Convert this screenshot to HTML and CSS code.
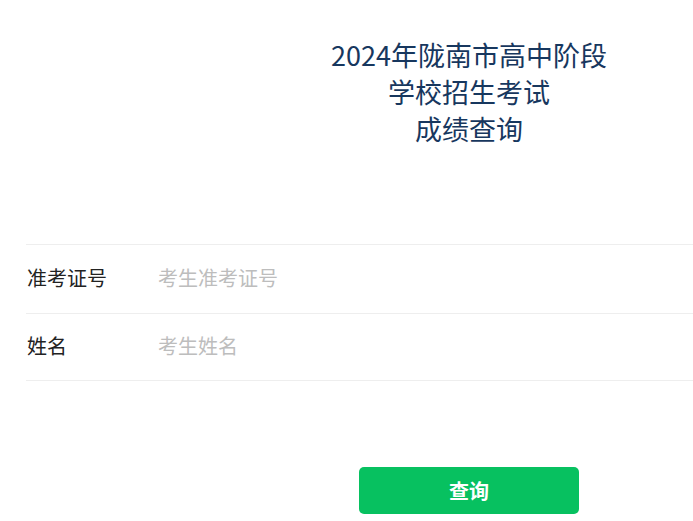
FILE: index.html
```html
<!DOCTYPE html>
<html lang="zh">
<head>
<meta charset="utf-8">
<title>成绩查询</title>
<link rel="stylesheet" href="styles.css">
</head>
<body>
<div class="page">
  <h1 class="title">2024年陇南市高中阶段<br>学校招生考试<br>成绩查询</h1>
  <form class="form">
    <div class="fields">
      <div class="row">
        <label class="label">准考证号</label>
        <input class="input" type="text" placeholder="考生准考证号">
      </div>
      <div class="row">
        <label class="label">姓名</label>
        <input class="input" type="text" placeholder="考生姓名">
      </div>
    </div>
    <div class="actions">
      <button class="btn" type="button">查询</button>
    </div>
  </form>
</div>
</body>
</html>
```
FILE: styles.css
```css
html, body {
  margin: 0;
  padding: 0;
  background: #fff;
  overflow: hidden;
}
body {
  font-family: "Noto Sans CJK SC", "Noto Sans", sans-serif;
}
.page {
  width: 886px;
  margin-left: 26px;
}
.title {
  margin: 36px 0 0;
  text-align: center;
  font-weight: 400;
  font-size: 27px;
  line-height: 37px;
  color: #17375e;
}
.form {
  margin-top: 97px;
}
.fields {
  border-bottom: 1px solid #eeeeee;
}
.row {
  display: flex;
  align-items: center;
  height: 64px;
  padding-bottom: 4px;
  border-top: 1px solid #eeeeee;
}
.row + .row {
  height: 62px;
}
.label {
  width: 131px;
  padding-left: 1px;
  font-size: 20px;
  color: #222;
}
.input {
  flex: 1;
  border: none;
  outline: none;
  padding: 0;
  font-family: inherit;
  font-size: 20px;
  color: #222;
  background: transparent;
}
.input::placeholder {
  color: #bdbdbd;
}
.actions {
  display: flex;
  justify-content: center;
  margin-top: 86px;
}
.btn {
  width: 220px;
  height: 47px;
  border: none;
  border-radius: 5px;
  background: #07c160;
  color: #fff;
  font-family: inherit;
  font-size: 20px;
  font-weight: 700;
}
```
